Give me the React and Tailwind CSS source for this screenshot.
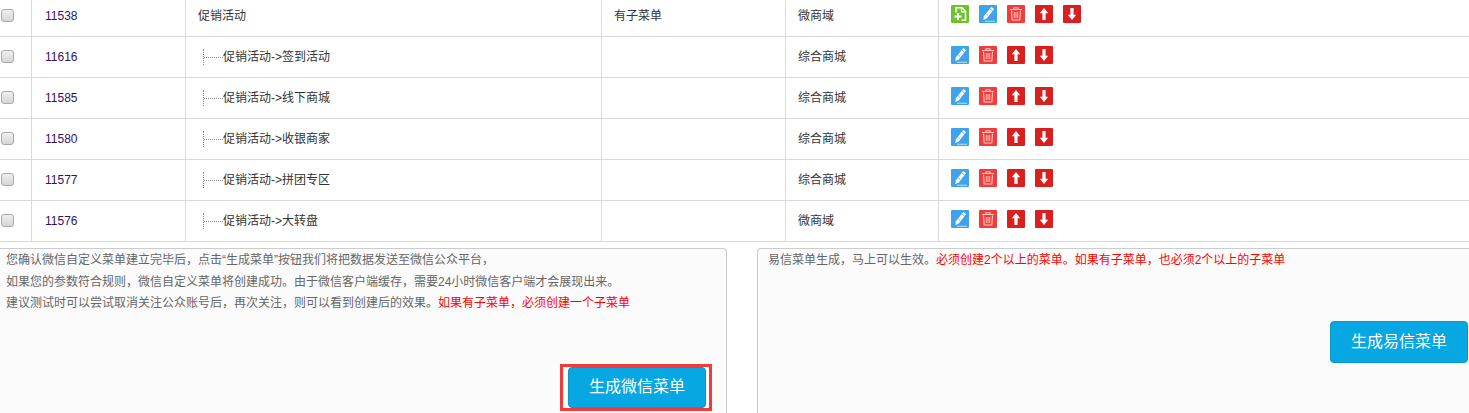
import React from "react";

const rows = [
  { id: "11538", name: "促销活动", child: false, sub: "有子菜单", shop: "微商域" },
  { id: "11616", name: "促销活动->签到活动", child: true, sub: "", shop: "综合商城" },
  { id: "11585", name: "促销活动->线下商城", child: true, sub: "", shop: "综合商城" },
  { id: "11580", name: "促销活动->收银商家", child: true, sub: "", shop: "综合商城" },
  { id: "11577", name: "促销活动->拼团专区", child: true, sub: "", shop: "综合商城" },
  { id: "11576", name: "促销活动->大转盘", child: true, sub: "", shop: "微商域" },
];

// 18px square action icons
function IconBox({ bg, children }) {
  return (
    <span className={"block w-[18px] h-[18px] shrink-0 rounded-[1px] " + bg}>
      <svg viewBox="0 0 18 18" width="18" height="18" className="block">
        {children}
      </svg>
    </span>
  );
}

const AddIcon = () => (
  <IconBox bg="bg-[#6fc22e]">
    <path d="M5 7.5V2.8h6l3.5 3.5v8.9H10.5" fill="none" stroke="#fff" strokeWidth="1.5" />
    <path d="M10.5 3v3.8h3.8" fill="none" stroke="#fff" strokeWidth="1.2" />
    <path d="M3.5 11.5h7M7 8v7" fill="none" stroke="#fff" strokeWidth="2" />
  </IconBox>
);

const EditIcon = () => (
  <IconBox bg="bg-[#3fa3ec]">
    <path d="M12.4 2l2.7 2.1-7.3 9.3-3.5 1.5.6-3.7z" fill="#fff" />
    <path d="M11 4l2.7 2.1M7.4 9.2l1.6 1.3" stroke="#3fa3ec" strokeWidth="0.8" />
    <path d="M6 16.3h10" stroke="#a9d6f5" strokeWidth="1.2" />
  </IconBox>
);

const DeleteIcon = () => (
  <IconBox bg="bg-[#f23c3c]">
    <path d="M3 4.5h12M7 4V2.8h4V4" fill="none" stroke="#ffc9c4" strokeWidth="1.1" />
    <path d="M4.5 5.5l.7 9.5h7.6l.7-9.5" fill="none" stroke="#ffc9c4" strokeWidth="1.1" />
    <path d="M7.3 7v6M9 7v6M10.7 7v6" fill="none" stroke="#ffc9c4" strokeWidth="0.9" />
  </IconBox>
);

const UpIcon = () => (
  <IconBox bg="bg-[#d9201f]">
    <path d="M9 3l4.2 5.2h-2.6V15H7.4V8.2H4.8z" fill="#fff" />
  </IconBox>
);

const DownIcon = () => (
  <IconBox bg="bg-[#d9201f]">
    <path d="M9 15l4.2-5.2h-2.6V3H7.4v6.8H4.8z" fill="#fff" />
  </IconBox>
);

function Checkbox() {
  return (
    <span className="block w-[13px] h-[13px] rounded-[3px] border border-[#a9a9a9] bg-gradient-to-b from-[#efefef] to-[#d6d6d6]" />
  );
}

function Row({ row, index }) {
  const first = index === 0;
  return (
    <div
      className={
        "grid grid-cols-[32px_154px_416px_184px_153px_1fr] border-b border-[#d9d9d9] " +
        (first ? "h-[37px]" : "h-[41px]")
      }
    >
      <div className={"flex items-center pl-[1px] border-r border-[#d9d9d9] " + (first ? "pb-[6px]" : "pb-[1px]")}>
        <Checkbox />
      </div>
      <div className={"flex items-center pl-[13px] border-r border-[#d9d9d9] text-[#35105f] " + (first ? "pb-[4px]" : "")}>
        {row.id}
      </div>
      <div className={"flex items-center pl-[12px] border-r border-[#d9d9d9] " + (first ? "pb-[4px]" : "")}>
        {row.child ? (
          <div className="flex items-center pl-[5px]">
            <span className="w-[20px] h-[16px] border-l border-dotted border-[#8a8a8a] flex items-center">
              <span className="block w-full border-t border-dotted border-[#8a8a8a]" />
            </span>
            <span>{row.name}</span>
          </div>
        ) : (
          row.name
        )}
      </div>
      <div className={"flex items-center pl-[12px] border-r border-[#d9d9d9] " + (first ? "pb-[4px]" : "")}>
        {row.sub}
      </div>
      <div className={"flex items-center pl-[12px] border-r border-[#d9d9d9] " + (first ? "pb-[4px]" : "")}>
        {row.shop}
      </div>
      <div className={"flex items-center gap-[10px] pl-[12px] " + (first ? "pb-[8px]" : "pb-[4px]")}>
        {first && <AddIcon />}
        <EditIcon />
        <DeleteIcon />
        <UpIcon />
        <DownIcon />
      </div>
    </div>
  );
}

export default function App() {
  return (
    <div className="w-[1469px] h-[413px] overflow-hidden bg-white text-[12px] text-[#333] font-['Liberation_Sans','Noto_Sans_CJK_SC',sans-serif]">
      <div>
        {rows.map((row, i) => (
          <Row key={row.id} row={row} index={i} />
        ))}
      </div>

      <div className="flex gap-[30px] pt-[6px]">
        <div className="w-[727px] h-[170px] shrink-0 flex flex-col border border-[#ccc] border-l-0 rounded-tr-[4px] bg-[#fbfbfb] pl-[6px] pt-[1px] text-[#666] leading-[21.5px]">
          <p>您确认微信自定义菜单建立完毕后，点击“生成菜单”按钮我们将把数据发送至微信公众平台，</p>
          <p>如果您的参数符合规则，微信自定义菜单将创建成功。由于微信客户端缓存，需要24小时微信客户端才会展现出来。</p>
          <p>
            建议测试时可以尝试取消关注公众账号后，再次关注，则可以看到创建后的效果。
            <span className="text-[#f00]">如果有子菜单，必须创建一个子菜单</span>
          </p>
          <div className="flex justify-end pt-[49px] pr-[14px]">
            <div className="border-[3px] border-[#f23a3a] pl-[5px] pr-[3px] bg-white">
              <button className="block w-[138px] h-[41px] rounded-[4px] border border-[#0b97c9] bg-[#06a7e2] text-white text-[16px]">
                生成微信菜单
              </button>
            </div>
          </div>
        </div>

        <div className="flex-1 h-[170px] flex flex-col border border-[#ccc] border-r-0 rounded-tl-[4px] bg-[#fbfbfb] pl-[10px] pr-[1px] pt-[1px] text-[#666] leading-[21.5px]">
          <p>
            易信菜单生成，马上可以生效。
            <span className="text-[#f00]">必须创建2个以上的菜单。如果有子菜单，也必须2个以上的子菜单</span>
          </p>
          <div className="flex justify-end pt-[49px]">
            <button className="block w-[138px] h-[42px] rounded-[4px] border border-[#0b97c9] bg-[#06a7e2] text-white text-[16px]">
              生成易信菜单
            </button>
          </div>
        </div>
      </div>
    </div>
  );
}
